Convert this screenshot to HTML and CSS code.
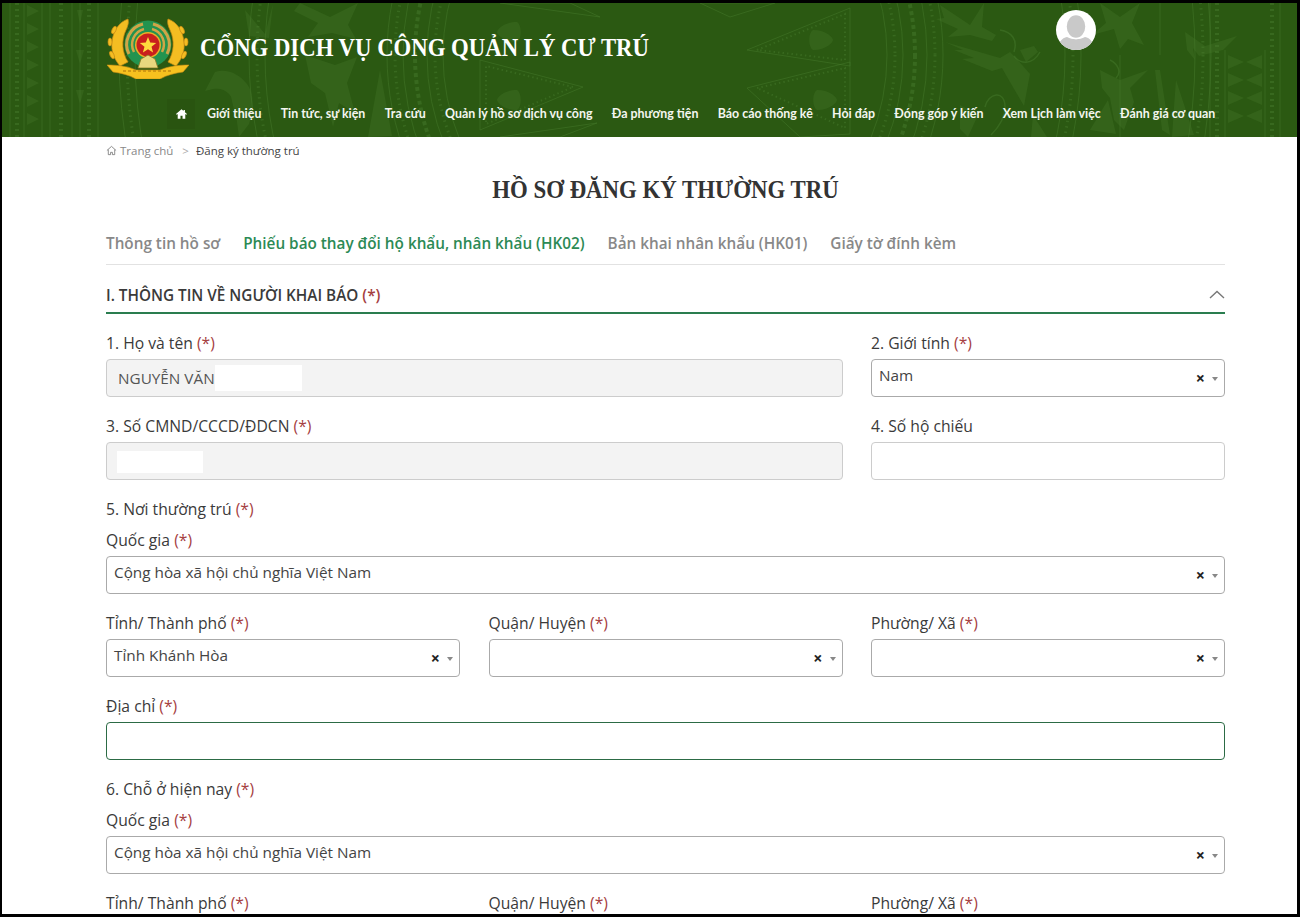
FILE: index.html
```html
<!DOCTYPE html>
<html lang="vi">
<head>
<meta charset="utf-8">
<title>Hồ sơ đăng ký thường trú</title>
<link rel="stylesheet" href="styles.css">
</head>
<body>
<div class="frame">
<header class="site-header">
  <svg class="pattern" viewBox="2 3 1295 134" preserveAspectRatio="none" aria-hidden="true">
    <g fill="none" stroke="#467a2c" stroke-opacity=".5">
      <!-- drum rings -->
      <circle cx="665" cy="55" r="222"/>
      <circle cx="665" cy="55" r="230" stroke-width="3" stroke-dasharray="1.500 4"/>
      <circle cx="665" cy="55" r="238"/>
      <circle cx="665" cy="55" r="250" stroke-width="4" stroke-dasharray="4 3"/>
      <circle cx="665" cy="55" r="262"/>
      <circle cx="665" cy="55" r="270" stroke-width="3" stroke-dasharray="1.500 4"/>
      <circle cx="665" cy="55" r="278"/>
      <circle cx="665" cy="55" r="400"/>
      <circle cx="665" cy="55" r="408" stroke-width="3" stroke-dasharray="1.500 4"/>
      <circle cx="665" cy="55" r="416"/>
      <circle cx="665" cy="55" r="530"/>
      <circle cx="665" cy="55" r="538" stroke-width="3" stroke-dasharray="1.500 4"/>
      <circle cx="665" cy="55" r="546"/>
      <!-- star rays -->
      <path d="M747 50 850 8V66ZM747 88 850 62V134L800 137ZM730 17 775 3H700ZM583 87 480 60V130ZM600 17 500 3 570 3ZM597 123 500 137H560Z" stroke-width="1"/>
      <path d="M757 50 845 14V60ZM757 88 845 68V128ZM573 87 486 66V124Z" stroke-width="2" stroke-dasharray="1.500 3"/>
      <!-- vertical strips -->
      <path d="M10 3V137M24 3V137M42 3V137M50 3V137M72 3V137M80 3V137M98 3V137M1120 55V137M1160 3V55M1210 3V137M1225 50V137M1265 50V137M1280 3V137" stroke-width="1"/>
      <path d="M17 3V137M61 3V137M89 3V137M1217 3V137M1272 3V137" stroke-width="4" stroke-dasharray="2 4"/>
      <!-- line work on figures -->
      <path d="M1000 30c12 2 18 10 14 22M1040 52c-8 14-20 12-26 4M985 107c3-14 20-18 20 0 0 12-8 22-14 28M1090 45c-10-6-5-14 3-14M1110 60c8 4 12 12 6 18" stroke-width="1.500"/>
    </g>
    <g fill="#467a2c" fill-opacity=".32">
      <!-- hearts in the rays -->
      <path d="M517 22c-14 0-20 8-20 10 0 2 6 10 20 10 5-3 5-17 0-20ZM517 90c-14 0-20 8-20 10s6 10 20 10c5-3 5-17 0-20ZM813 30c14 0 20 8 20 10s-6 10-20 10c-5-3-5-17 0-20ZM817 90c14 0 20 8 20 10s-6 10-20 10c-5-3-5-17 0-20Z"/>
      <!-- flying birds -->
      <path d="M945 42l55 16 10-6 6 6 14 16-6 32-14-24-8-14-10 3-30-12 12-1-20-8 9 0zM1020 50l14-4 4 6-12 10z"/>
      <path d="M940 5l30 20 14-22-2 24 14 8-4 6-22-6-22 2 10-8-22-10 8-1z"/>
      <path d="M1100 70l20 10 28-10-18 18 4 14-10 28-10-10-4-22-8-10zM1090 130l18-30 8 34z"/>
      <path d="M1100 3l20 14 20-14-8 20 12 22-16-6-8 10-6-20-22 6 14-12zM1185 32l20 14 32-10-14 14-24 6-6-8 2 12-8-10z"/>
      <path d="M1155 70l7 60 8 5-10-65zM1176 80l18 55-22 2 2-30z"/>
      <path d="M960 105l18 10-10 22-8-8zM1033 115l14 22h-16z"/>
      <!-- left birds -->
      <path d="M215 72c12-4 24 2 32 12 8 10 6 26 2 40l-10 13-4-30c-2-12-10-20-22-18l-8 2zM230 92l12 4 0 16-8-2z"/>
      <path d="M300 3l30 14 28-14-10 22 8 14-24-6-24 4 10-14-24-12zM305 55l30 10 22-8-10 26 8 30-16-10-6 24-8-34-14-10z"/>
      <path d="M245 10l20 24 8-30-4 34-20-2zM380 70l12 66-24 1z"/>
      <!-- zigzags -->
      <path d="M27 5l12 6-12 6zM27 23l12 6-12 6zM27 41l12 6-12 6zM27 59l12 6-12 6zM27 77l12 6-12 6zM27 95l12 6-12 6zM27 113l12 6-12 6zM83 10h-6l3 14zM84 50h-8l4 14zM84 90h-8l4 14z"/>
      <path d="M1228 55l16 7-16 7zM1228 73l16 7-16 7zM1228 91l16 7-16 7zM1228 109l16 7-16 7zM1262 55l-16 7 16 7zM1262 73l-16 7 16 7zM1262 91l-16 7 16 7zM1262 109l-16 7 16 7z"/>
    </g>
  </svg>
  <div class="brand-row">
    <svg class="logo" viewBox="0 0 82 61" aria-hidden="true">
      <g fill="#f4bd22" stroke="#c98d14" stroke-width=".7">
        <path d="M21 1C12 4 6 13 5 24c-1 9 2 17 8 24l8-4C15 35 14 22 19 12c2-4 3-8 2-11z"/>
        <path d="M61 1c9 3 15 12 16 23 1 9-2 17-8 24l-8-4c6-9 7-22 2-32-2-4-3-8-2-11z"/>
        <ellipse cx="7" cy="12" rx="2" ry="4" transform="rotate(25 7 12)"/>
        <ellipse cx="3" cy="24" rx="2" ry="4"/>
        <ellipse cx="5" cy="37" rx="2" ry="4" transform="rotate(-25 5 37)"/>
        <ellipse cx="75" cy="12" rx="2" ry="4" transform="rotate(-25 75 12)"/>
        <ellipse cx="79" cy="24" rx="2" ry="4"/>
        <ellipse cx="77" cy="37" rx="2" ry="4" transform="rotate(25 77 37)"/>
      </g>
      <circle cx="41" cy="26" r="23.500" fill="#23934f"/>
      <path d="M22 36a21 21 0 0 1 14-30M60 36A21 21 0 0 0 46 6" fill="none" stroke="#cfa546" stroke-width="3"/>
      <path d="M27 34a16 16 0 0 1 10-23M55 34a16 16 0 0 0-10-23" fill="none" stroke="#cfa546" stroke-width="2.500"/>
      <circle cx="41" cy="27" r="13" fill="#e9b028"/>
      <circle cx="41" cy="27" r="11.500" fill="#c91f1d"/>
      <path d="M41 19l2.200 5.600 6 .3-4.700 3.800 1.600 5.800-5.100-3.300-5.100 3.300 1.600-5.800-4.700-3.800 6-.3z" fill="#ffd93d"/>
      <path d="M31 50l3-9 7-4 7 4 3 9z" fill="#e9d77e" stroke="#8a7a25" stroke-width=".8"/>
      <path d="M0 47c10 0 20 1 29 5h24c9-4 19-5 29-5l-6 7c-8 1-16 3-23 7H29c-7-4-15-6-23-7z" fill="#f6c11f" stroke="#c98d14" stroke-width=".6"/>
      <path d="M16 53h50" stroke="#c48a12" stroke-width="1.500" stroke-dasharray="3 2"/>
    </svg>
    <div class="site-title">CỔNG DỊCH VỤ CÔNG QUẢN LÝ CƯ TRÚ</div>
    <svg class="avatar" viewBox="0 0 40 40" aria-hidden="true">
      <defs><clipPath id="avatar-clip"><circle cx="20" cy="20" r="20"/></clipPath></defs>
      <circle cx="20" cy="20" r="20" fill="#fff"/>
      <g clip-path="url(#avatar-clip)">
        <path d="M2 40c0-8 4-12 9-13 6 3 12 3 18 0 5 1 9 5 9 13z" fill="#c9c9c9"/>
        <ellipse cx="20" cy="16.500" rx="10" ry="12" fill="#c9c9c9" stroke="#fff" stroke-width="1.500"/>
      </g>
    </svg>
  </div>
  <nav class="main-nav">
    <a class="nav-home" href="#" aria-label="Trang chủ">
      <svg viewBox="0 0 16 14" width="11" height="10" aria-hidden="true"><path fill="#fff" d="M8 0 0 7l1 1.200L2.500 7v7h4V9.500h3V14h4V7L15 8.200 16 7l-3-2.600V1h-2v1.700z"/></svg>
    </a>
    <a href="#">Giới thiệu</a>
    <a href="#">Tin tức, sự kiện</a>
    <a href="#">Tra cứu</a>
    <a href="#">Quản lý hồ sơ dịch vụ công</a>
    <a href="#">Đa phương tiện</a>
    <a href="#">Báo cáo thống kê</a>
    <a href="#">Hỏi đáp</a>
    <a href="#">Đóng góp ý kiến</a>
    <a href="#">Xem Lịch làm việc</a>
    <a href="#">Đánh giá cơ quan</a>
  </nav>
</header>

<main class="content">
  <div class="breadcrumb">
    <svg class="crumb-home" viewBox="0 0 12 12" aria-hidden="true"><path d="M1 6 6 1.500 11 6M2.500 5v5.500h2.500V8h2v2.500h2.500V5" fill="none" stroke="#777" stroke-width=".9"/></svg>
    <span class="crumb-root">Trang chủ</span>
    <span class="crumb-sep">&gt;</span>
    <span class="crumb-current">Đăng ký thường trú</span>
  </div>
  <h1 class="page-title">HỒ SƠ ĐĂNG KÝ THƯỜNG TRÚ</h1>
  <div class="tabs">
    <span class="tab">Thông tin hồ sơ</span>
    <span class="tab tab-active">Phiếu báo thay đổi hộ khẩu, nhân khẩu (HK02)</span>
    <span class="tab">Bản khai nhân khẩu (HK01)</span>
    <span class="tab">Giấy tờ đính kèm</span>
  </div>
  <div class="section-head">
    <span>I. THÔNG TIN VỀ NGƯỜI KHAI BÁO <em>(*)</em></span>
    <svg class="chevron" viewBox="0 0 16 9" aria-hidden="true"><path d="M1 8 8 1.500 15 8" fill="none" stroke="#777" stroke-width="1.400"/></svg>
  </div>

  <div class="form-grid">
    <div class="field span-2">
      <label>1. Họ và tên <em>(*)</em></label>
      <div class="box box-readonly">NGUYỄN VĂN<span class="redact redact-name"></span></div>
    </div>
    <div class="field">
      <label>2. Giới tính <em>(*)</em></label>
      <div class="box box-select"><span>Nam</span><i class="clear">×</i><i class="arrow"></i></div>
    </div>
    <div class="field span-2">
      <label>3. Số CMND/CCCD/ĐDCN <em>(*)</em></label>
      <div class="box box-readonly"><span class="redact redact-id"></span></div>
    </div>
    <div class="field">
      <label>4. Số hộ chiếu</label>
      <input class="box box-input" type="text">
    </div>

    <div class="group-label span-3">5. Nơi thường trú <em>(*)</em></div>
    <div class="field span-3">
      <label>Quốc gia <em>(*)</em></label>
      <div class="box box-select"><span>Cộng hòa xã hội chủ nghĩa Việt Nam</span><i class="clear">×</i><i class="arrow"></i></div>
    </div>
    <div class="field">
      <label>Tỉnh/ Thành phố <em>(*)</em></label>
      <div class="box box-select"><span>Tỉnh Khánh Hòa</span><i class="clear">×</i><i class="arrow"></i></div>
    </div>
    <div class="field">
      <label>Quận/ Huyện <em>(*)</em></label>
      <div class="box box-select"><span></span><i class="clear">×</i><i class="arrow"></i></div>
    </div>
    <div class="field">
      <label>Phường/ Xã <em>(*)</em></label>
      <div class="box box-select"><span></span><i class="clear">×</i><i class="arrow"></i></div>
    </div>
    <div class="field span-3">
      <label>Địa chỉ <em>(*)</em></label>
      <input class="box box-input box-focus" type="text">
    </div>

    <div class="group-label span-3">6. Chỗ ở hiện nay <em>(*)</em></div>
    <div class="field span-3">
      <label>Quốc gia <em>(*)</em></label>
      <div class="box box-select"><span>Cộng hòa xã hội chủ nghĩa Việt Nam</span><i class="clear">×</i><i class="arrow"></i></div>
    </div>
    <div class="field">
      <label>Tỉnh/ Thành phố <em>(*)</em></label>
    </div>
    <div class="field">
      <label>Quận/ Huyện <em>(*)</em></label>
    </div>
    <div class="field">
      <label>Phường/ Xã <em>(*)</em></label>
    </div>
  </div>
</main>
</div>
</body>
</html>
```
FILE: styles.css
```css
* { box-sizing: border-box; }
html, body { margin: 0; height: 100%; overflow: hidden; background: #000; }
body { padding: 3px 3px 3px 2px; font-family: "Open Sans", "Noto Sans", sans-serif; color: #333; }
.frame { height: 911px; background: #fff; overflow: hidden; }

.site-header { position: relative; height: 134px; background: #2b5912; display: flex; flex-direction: column; overflow: hidden; }
.pattern { position: absolute; inset: 0; width: 100%; height: 100%; }
.brand-row { position: relative; display: flex; align-items: flex-start; padding: 7px 201px 0 105px; height: 85px; }
.logo { width: 82px; height: 61px; margin-top: 8px; flex: none; }
.site-title { margin: 23px 0 0 11px; font: 700 25px/30px "Liberation Serif", serif; color: #fff; white-space: nowrap; transform: scaleX(.91); transform-origin: left center; width: 449px; }
.avatar { width: 40px; height: 40px; margin-left: auto; flex: none; }
.main-nav { position: relative; display: flex; align-items: center; gap: 19.3px; padding: 2px 0 0 165px; height: 49px; }
.main-nav a { font: 700 12.4px/16px Lato, sans-serif; color: #f4f6ef; text-decoration: none; white-space: nowrap; }
.main-nav .nav-home { display: flex; align-items: center; justify-content: center; width: 28px; height: 30px; margin-right: -7.3px; background: #295410; }

.content { margin: 0 72px 0 104px; }
.breadcrumb { display: flex; align-items: center; height: 26px; font-size: 11.500px; }
.crumb-home { width: 11px; height: 11px; margin-right: 3px; }
.crumb-root { color: #888; }
.crumb-sep { margin: 0 7px 0 9px; color: #aaa; }
.crumb-current { color: #444; }
.page-title { margin: 14px 0 0; height: 26px; font: 700 25px/26px "Liberation Serif", serif; text-align: center; color: #333; transform: scaleX(.913); }
.tabs { display: flex; gap: 23px; margin-top: 28px; padding-bottom: 10px; border-bottom: 1px solid #e2e2e2; height: 34px; }
.tab { font-size: 15.300px; font-weight: 600; line-height: 24px; color: #888; white-space: nowrap; }
.tab-active { color: #2c8a55; }
.section-head { display: flex; justify-content: space-between; align-items: center; height: 49px; padding-top: 12px; border-bottom: 2px solid #2a7d4f; font-size: 15.300px; font-weight: 600; color: #3a3a3a; }
.chevron { width: 16px; height: 9px; }
em { font-style: normal; color: #a5403f; }

.form-grid { display: grid; grid-template-columns: repeat(3, 1fr); column-gap: 28.500px; margin-top: 18px; }
.span-2 { grid-column: span 2; }
.span-3 { grid-column: span 3; }
.field { display: flex; flex-direction: column; margin-bottom: 18px; }
.field label, .group-label { display: block; height: 22px; font-size: 15.700px; font-weight: 500; line-height: 22px; color: #3a3a3a; }
.field label { margin-bottom: 5px; }
.group-label { margin-bottom: 9px; }
.box { display: flex; align-items: center; width: 100%; height: 38px; border: 1px solid #ccc; border-radius: 4px; background: #fff; font: 400 15.300px "Open Sans", sans-serif; color: #444; outline: none; }
.box-readonly { padding-left: 11px; background: #f3f3f3; color: #555; }
.box-select { padding: 0 6px 6px 7px; border-color: #aaa; }
.box-select span { flex: 1; white-space: nowrap; }
.box-focus { border-color: #2c6b45; }
.clear { font: 700 16px/1 "Open Sans", sans-serif; font-style: normal; color: #222; margin: 5px 7px 0 0; }
.arrow { width: 0; height: 0; margin-top: 8px; border-left: 3.500px solid transparent; border-right: 3.500px solid transparent; border-top: 4px solid #888; }
.redact { display: inline-block; background: #fff; height: 26px; }
.redact-name { width: 87px; }
.redact-id { width: 86px; height: 22px; margin-left: -1px; margin-top: 2px; }
```
